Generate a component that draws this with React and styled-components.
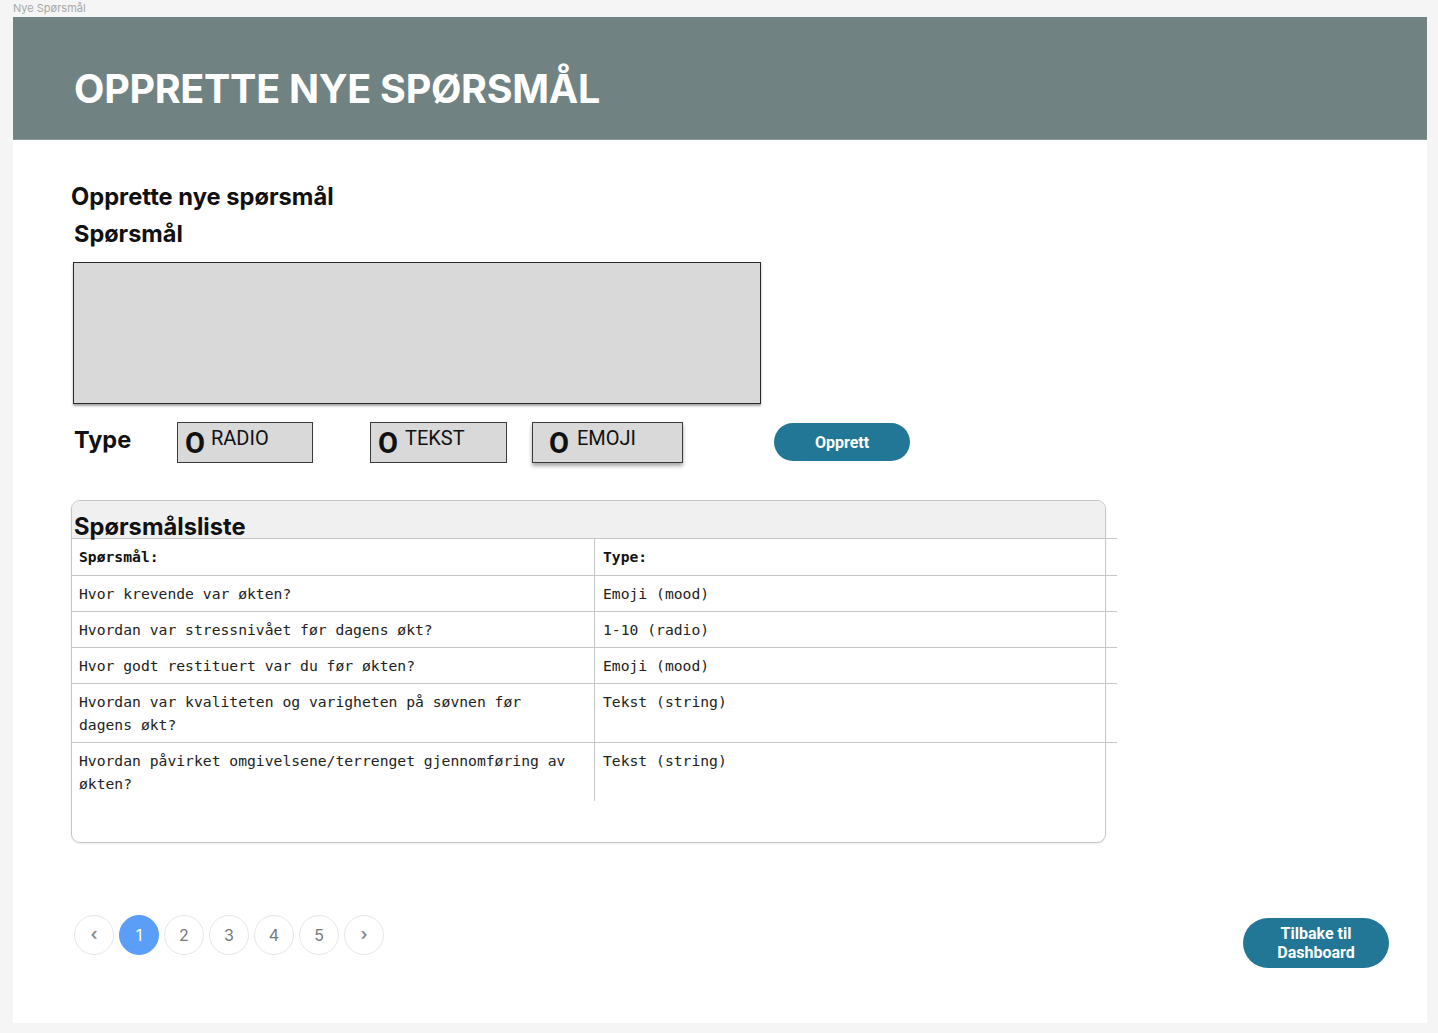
import React from 'react';
import styled, { createGlobalStyle } from 'styled-components';

const questions = [
    { id: 1, text: 'Hvor krevende var økten?', type: 'Emoji (mood)' },
    { id: 2, text: 'Hvordan var stressnivået før dagens økt?', type: '1-10 (radio)' },
    { id: 3, text: 'Hvor godt restituert var du før økten?', type: 'Emoji (mood)' },
    { id: 4, text: 'Hvordan var kvaliteten og varigheten på søvnen før dagens økt?', type: 'Tekst (string)' },
    { id: 5, text: 'Hvordan påvirket omgivelsene/terrenget gjennomføring av økten?', type: 'Tekst (string)' },
];

const typeOptions = [
    { id: 'radio', label: 'RADIO', width: 136, offset: 48, pad: 7, space: 6, shadow: false },
    { id: 'tekst', label: 'TEKST', width: 137, offset: 57, pad: 7, space: 7, shadow: false },
    { id: 'emoji', label: 'EMOJI', width: 151, offset: 25, pad: 16, space: 8, shadow: true },
];

const pages = ['‹', '1', '2', '3', '4', '5', '›'];

const GlobalStyle = createGlobalStyle`
    html, body {
        margin: 0;
        padding: 0;
        background: #f5f5f5;
    }
    body {
        font-family: Inter, "Noto Sans", sans-serif;
    }
`;

const App = () => {
    return (
        <>
            <GlobalStyle />
            <Styled.Page>
                <Styled.Caption>Nye Spørsmål</Styled.Caption>
                <Styled.Frame>
                    <Styled.Header>
                        <Styled.Title>OPPRETTE NYE SPØRSMÅL</Styled.Title>
                    </Styled.Header>
                    <Styled.Content>
                        <Styled.Heading>Opprette nye spørsmål</Styled.Heading>
                        <Styled.Label>Spørsmål</Styled.Label>
                        <Styled.QuestionBox />
                        <Styled.TypeRow>
                            <Styled.TypeLabel>Type</Styled.TypeLabel>
                            {typeOptions.map((opt) => (
                                <Styled.Option
                                    key={opt.id}
                                    $width={opt.width}
                                    $offset={opt.offset}
                                    $pad={opt.pad}
                                    $shadow={opt.shadow}
                                >
                                    <Styled.Circle>O</Styled.Circle>
                                    <Styled.OptionText $space={opt.space}>{opt.label}</Styled.OptionText>
                                </Styled.Option>
                            ))}
                            <Styled.CreateButton>Opprett</Styled.CreateButton>
                        </Styled.TypeRow>

                        <Styled.Card>
                            <Styled.CardTitle>Spørsmålsliste</Styled.CardTitle>
                            <Styled.Table>
                                <Styled.Row $first>
                                    <Styled.HeadCell>Spørsmål:</Styled.HeadCell>
                                    <Styled.HeadCell>Type:</Styled.HeadCell>
                                </Styled.Row>
                                {questions.map((q, i) => (
                                    <Styled.Row key={q.id} $last={i === questions.length - 1}>
                                        <Styled.Cell>{q.text}</Styled.Cell>
                                        <Styled.Cell>{q.type}</Styled.Cell>
                                    </Styled.Row>
                                ))}
                            </Styled.Table>
                        </Styled.Card>
                    </Styled.Content>

                    <Styled.Footer>
                        <Styled.Pagination>
                            {pages.map((p, i) => (
                                <Styled.PageDot key={i} $active={p === '1'} $arrow={isNaN(p)}>
                                    {p}
                                </Styled.PageDot>
                            ))}
                        </Styled.Pagination>
                        <Styled.BackButton>Tilbake til<br />Dashboard</Styled.BackButton>
                    </Styled.Footer>
                </Styled.Frame>
            </Styled.Page>
        </>
    );
};

const Styled = {
    Page: styled.div`
        padding: 0 11px 10px 13px;
        width: 1438px;
        box-sizing: border-box;
    `,

    Caption: styled.div`
        height: 17px;
        font-size: 11px;
        line-height: 17px;
        color: #a8a8a8;
    `,

    Frame: styled.div`
        width: 1414px;
        height: 1006px;
        background: #ffffff;
        display: flex;
        flex-direction: column;
    `,

    Header: styled.div`
        height: 123px;
        background: #718283;
        padding: 0 0 0 61px;
        box-sizing: border-box;
        border-bottom: 1px solid #8c9a9b;
        display: flex;
        align-items: flex-start;
    `,

    Title: styled.h1`
        margin: 0;
        padding-top: 48px;
        font-size: 39.5px;
        line-height: 48px;
        font-weight: 700;
        letter-spacing: -0.3px;
        color: #ffffff;
    `,

    Content: styled.div`
        padding: 42px 0 0 58px;
        flex: 1;
    `,

    Heading: styled.h2`
        margin: 0;
        font-size: 23.7px;
        line-height: 29px;
        font-weight: 700;
        color: #111;
    `,

    Label: styled.h3`
        margin: 8px 0 0 3px;
        font-size: 23.5px;
        line-height: 29px;
        font-weight: 700;
        color: #111;
    `,

    QuestionBox: styled.div`
        margin: 14px 0 0 2px;
        width: 688px;
        height: 142px;
        box-sizing: border-box;
        background: #d9d9d9;
        border: 1px solid #2a2a2a;
        box-shadow: 0 2px 2px rgba(0, 0, 0, 0.35);
    `,

    TypeRow: styled.div`
        margin: 18px 0 0 3px;
        display: flex;
        align-items: flex-start;
        height: 41px;
    `,

    TypeLabel: styled.div`
        width: 55px;
        margin-top: 3px;
        font-size: 23.5px;
        line-height: 29px;
        font-weight: 700;
        color: #111;
    `,

    Option: styled.div`
        margin-left: ${(p) => p.$offset}px;
        width: ${(p) => p.$width}px;
        height: 41px;
        box-sizing: border-box;
        background: #d9d9d9;
        border: 1px solid #3a3a3a;
        display: flex;
        align-items: flex-start;
        padding-left: ${(p) => p.$pad}px;
        ${(p) => p.$shadow && `
            box-shadow: 0 3px 4px rgba(0, 0, 0, 0.35);
        `}
    `,

    Circle: styled.span`
        font-family: Roboto, "Liberation Sans", sans-serif;
        font-size: 29px;
        font-weight: 700;
        line-height: 29px;
        margin-top: 6px;
        color: #111;
    `,

    OptionText: styled.span`
        margin-left: ${(p) => p.$space}px;
        margin-top: 3px;
        font-family: Roboto, "Liberation Sans", sans-serif;
        font-size: 20px;
        line-height: 24px;
        color: #111;
    `,

    CreateButton: styled.button`
        margin: 1px 0 0 91px;
        width: 136px;
        height: 38px;
        border: none;
        border-radius: 19px;
        background: #217795;
        color: #ffffff;
        font-family: Roboto, "Liberation Sans", sans-serif;
        font-weight: 700;
        font-size: 16px;
        cursor: pointer;
    `,

    Card: styled.div`
        margin-top: 37px;
        width: 1035px;
        height: 343px;
        box-sizing: border-box;
        border: 1px solid #c6c6c6;
        border-radius: 9px;
        box-shadow: 0 1px 2px rgba(0, 0, 0, 0.08);
    `,

    CardTitle: styled.div`
        height: 37px;
        background: #f0f0f0;
        border-radius: 9px 9px 0 0;
        font-size: 23.7px;
        font-weight: 700;
        line-height: 24px;
        color: #111;
        padding: 14px 0 0 2px;
        box-sizing: border-box;
    `,

    Table: styled.div`
        width: 1046px;
        margin-left: -1px;
    `,

    Row: styled.div`
        display: grid;
        grid-template-columns: 523px 523px;
        border-top: ${(p) => (p.$first ? '1px solid #c6c6c6' : 'none')};
        border-bottom: ${(p) => (p.$last ? 'none' : '1px solid #c6c6c6')};
    `,

    HeadCell: styled.div`
        padding: 6px 16px 7px 8px;
        font-family: "DejaVu Sans Mono", "Liberation Mono", monospace;
        font-size: 14.7px;
        line-height: 23px;
        font-weight: 700;
        color: #111;
        & + & {
            border-left: 1px solid #c6c6c6;
        }
    `,

    Cell: styled.div`
        padding: 6px 16px 6px 8px;
        font-family: "DejaVu Sans Mono", "Liberation Mono", monospace;
        font-size: 14.7px;
        line-height: 23px;
        color: #222;
        & + & {
            border-left: 1px solid #c6c6c6;
        }
    `,

    Footer: styled.div`
        display: flex;
        justify-content: space-between;
        align-items: flex-start;
        padding: 0 38px 55px 61px;
    `,

    Pagination: styled.div`
        display: flex;
        gap: 5px;
    `,

    PageDot: styled.div`
        width: 40px;
        height: 40px;
        box-sizing: border-box;
        border-radius: 50%;
        border: 1px solid ${(p) => (p.$active ? '#5b9ef7' : '#e6e6e6')};
        background: ${(p) => (p.$active ? '#5b9ef7' : '#ffffff')};
        color: ${(p) => (p.$active ? '#ffffff' : p.$arrow ? '#888888' : '#777777')};
        display: flex;
        align-items: center;
        justify-content: center;
        font-size: ${(p) => (p.$arrow ? '17px' : '16px')};
        font-weight: ${(p) => (p.$arrow ? 600 : 400)};
        padding-bottom: ${(p) => (p.$arrow ? '2px' : '0')};
    `,

    BackButton: styled.button`
        margin-top: 3px;
        width: 146px;
        height: 50px;
        border: none;
        border-radius: 25px;
        background: #217795;
        color: #ffffff;
        font-family: Roboto, "Liberation Sans", sans-serif;
        font-weight: 700;
        font-size: 16px;
        line-height: 19px;
        cursor: pointer;
    `,
};

export default App;
